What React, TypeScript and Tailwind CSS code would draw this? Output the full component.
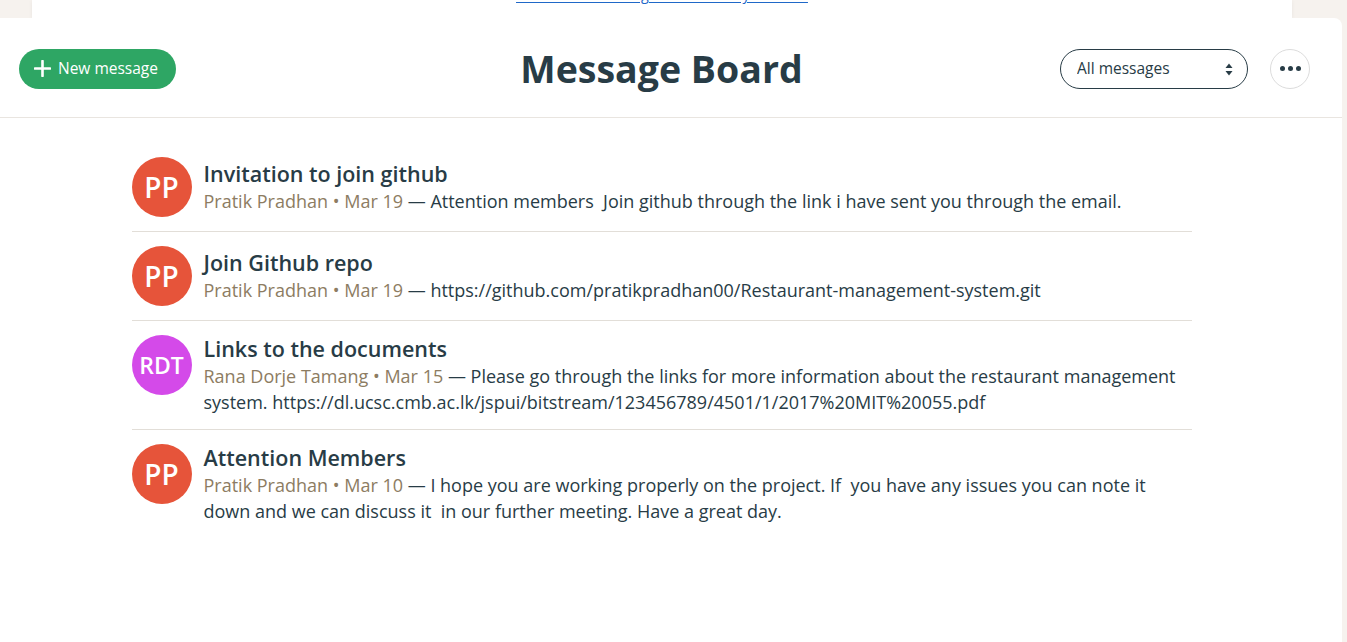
import { useState } from "react";

type Message = {
  id: number;
  initials: string;
  color: string;
  title: string;
  author: string;
  date: string;
  body: string;
};

const messages: Message[] = [
  {
    id: 1,
    initials: "PP",
    color: "bg-[#e6543a]",
    title: "Invitation to join github",
    author: "Pratik Pradhan",
    date: "Mar 19",
    body: "Attention members  Join github through the link i have sent you through the email.",
  },
  {
    id: 2,
    initials: "PP",
    color: "bg-[#e6543a]",
    title: "Join Github repo",
    author: "Pratik Pradhan",
    date: "Mar 19",
    body: "https://github.com/pratikpradhan00/Restaurant-management-system.git",
  },
  {
    id: 3,
    initials: "RDT",
    color: "bg-[#d44ae9]",
    title: "Links to the documents",
    author: "Rana Dorje Tamang",
    date: "Mar 15",
    body: "Please go through the links for more information about the restaurant management system. https://dl.ucsc.cmb.ac.lk/jspui/bitstream/123456789/4501/1/2017%20MIT%20055.pdf",
  },
  {
    id: 4,
    initials: "PP",
    color: "bg-[#e6543a]",
    title: "Attention Members",
    author: "Pratik Pradhan",
    date: "Mar 10",
    body: "I hope you are working properly on the project. If  you have any issues you can note it down and we can discuss it  in our further meeting. Have a great day.",
  },
];

function PlusIcon() {
  return (
    <svg width="17" height="17" viewBox="0 0 17 17" fill="none">
      <path d="M8.5 1v15M1 8.5h15" stroke="white" strokeWidth="2.6" strokeLinecap="round" />
    </svg>
  );
}

function SortArrows() {
  return (
    <svg width="8" height="13" viewBox="0 0 8 13">
      <path d="M4 0.5L7.5 5H0.5z" fill="#283c46" />
      <path d="M4 12.5L7.5 8H0.5z" fill="#283c46" />
    </svg>
  );
}

function MessageRow({ m }: { m: Message }) {
  return (
    <li className="flex items-start gap-3 pt-[14px] pb-[14px] border-b border-[#e2ded8] last:border-b-0">
      <div
        className={`${m.color} w-[60px] h-[60px] rounded-full shrink-0 flex items-center justify-center text-white font-semibold ${
          m.initials.length > 2 ? "text-[23px]" : "text-[28px]"
        }`}
      >
        {m.initials}
      </div>
      <div className="min-h-[60px] flex flex-col justify-center">
        <h3 className="text-[21.5px] leading-[28px] font-semibold text-[#283c46]">{m.title}</h3>
        <p className="text-[18px] leading-[26px] text-[#283c46]">
          <span className="text-[#8d7c62]">
            {m.author} • {m.date}
          </span>{" "}
          — <span className="whitespace-pre-wrap">{m.body}</span>
        </p>
      </div>
    </li>
  );
}

export default function App() {
  const [filter, setFilter] = useState("all");

  return (
    <div className="min-h-screen bg-[#f6f2ee] font-['Open_Sans',sans-serif] overflow-hidden">
      <div className="ml-[32px] w-[1260px] h-[18px] bg-white overflow-hidden shadow-[0_1px_4px_rgba(0,0,0,0.06)]">
        <div className="-mt-[18px] text-center">
          <a href="#" className="text-[14.4px] leading-[24px] text-[#1f68c8] underline underline-offset-2">
            Turn on the Message Board to stay in touch
          </a>
        </div>
      </div>

      <div className="-ml-[19px] mr-[5px] bg-white rounded-tr-lg min-h-[624px]">
        <header className="h-[100px] grid grid-cols-[1fr_auto_1fr] items-center border-b border-[#e9e5e0]">
          <div className="pl-[38px] pt-[2px]">
            <button className="h-[40px] pl-[15px] pr-[18px] rounded-full bg-[#2ea664] text-white text-[15.5px] flex items-center gap-[7px]">
              <PlusIcon />
              New message
            </button>
          </div>
          <h1 className="text-[37.5px] font-bold text-[#283c46] leading-none pt-[2px]">Message Board</h1>
          <div className="flex items-center justify-end gap-[22px] pr-[32px] pt-[2px]">
            <div className="relative">
              <select
                value={filter}
                onChange={(e) => setFilter(e.target.value)}
                className="appearance-none w-[188px] h-[40px] rounded-full border border-[#283c46] pl-4 pr-8 text-[15.5px] text-[#283c46] bg-white"
              >
                <option value="all">All messages</option>
                <option value="mine">My messages</option>
              </select>
              <span className="absolute right-[15px] top-[14px] pointer-events-none">
                <SortArrows />
              </span>
            </div>
            <button className="w-[40px] h-[40px] rounded-full border border-[#dcdcdc] flex items-center justify-center gap-[3px]">
              <span className="w-[5px] h-[5px] rounded-full bg-[#283c46]" />
              <span className="w-[5px] h-[5px] rounded-full bg-[#283c46]" />
              <span className="w-[5px] h-[5px] rounded-full bg-[#283c46]" />
            </button>
          </div>
        </header>

        <ul className="w-[1060px] mx-auto pt-[25px]">
          {messages.map((m) => (
            <MessageRow key={m.id} m={m} />
          ))}
        </ul>
      </div>
    </div>
  );
}
